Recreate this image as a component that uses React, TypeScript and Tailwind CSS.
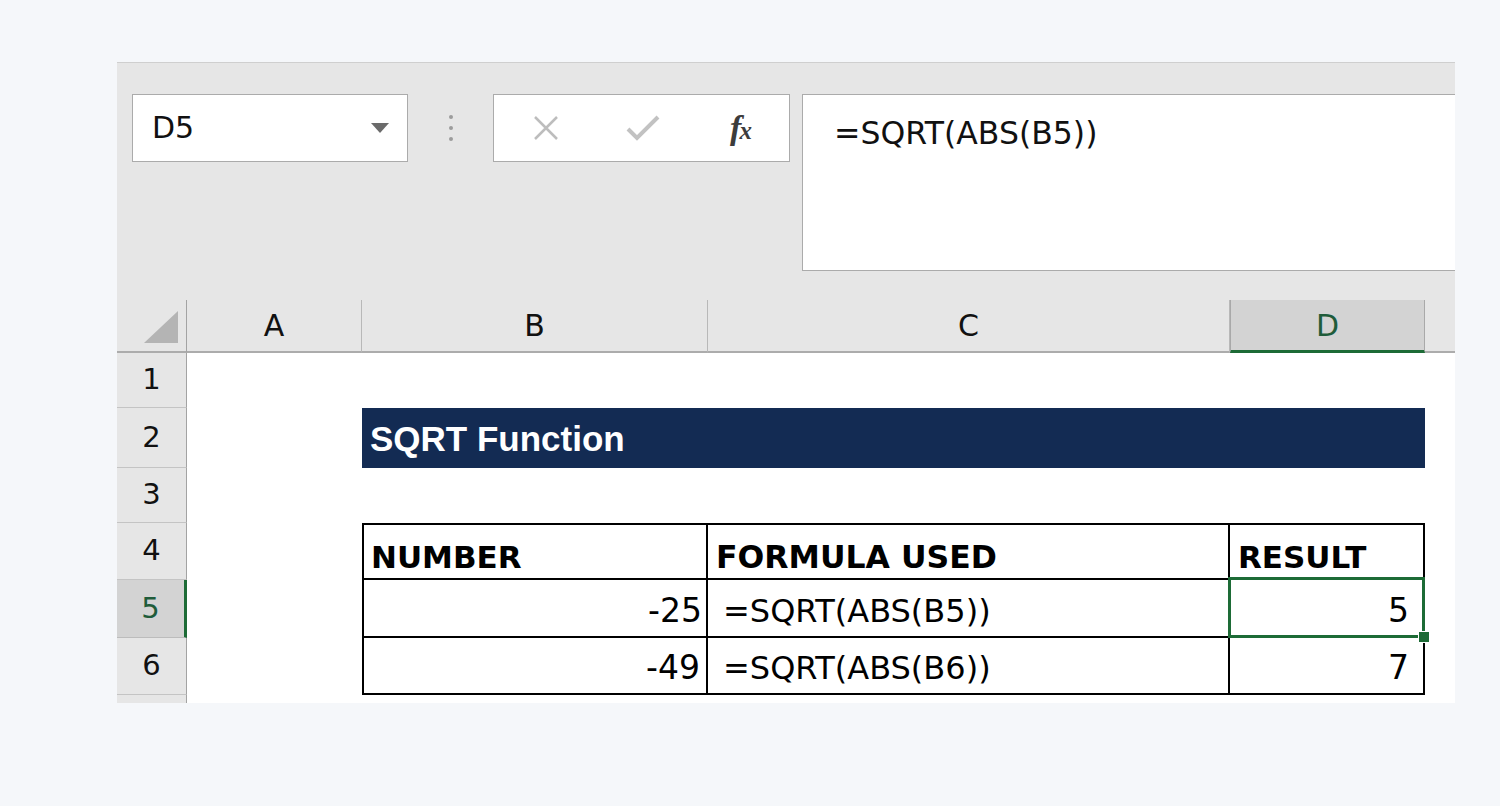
export default function App() {
  return (
    <div className="w-[1500px] h-[806px] bg-[#f5f7fa] pt-[62px] pl-[117px] font-['DejaVu_Sans',sans-serif]">
      <div className="w-[1338px] h-[641px] bg-[#e6e6e6] border-t border-[#cfcfcf] flex flex-col overflow-hidden">
        <FormulaBar />
        <Sheet />
      </div>
    </div>
  );
}

function FormulaBar() {
  return (
    <div className="h-[237px] pt-[31px] flex items-start shrink-0">
      <div className="ml-[15px] w-[276px] h-[68px] bg-white border border-[#ababab] flex items-center justify-between pl-[19px] pr-[17px]">
        <span className="text-[30px] leading-none text-[#111]">D5</span>
        <svg width="20" height="12" viewBox="0 0 20 12">
          <path d="M1 1 L19 1 L10 11 Z" fill="#6b6b6b" />
        </svg>
      </div>

      <div className="w-[85px] h-[68px] flex flex-col items-center justify-center gap-[7px]">
        <span className="w-[4px] h-[4px] rounded-full bg-[#9c9c9c]" />
        <span className="w-[4px] h-[4px] rounded-full bg-[#9c9c9c]" />
        <span className="w-[4px] h-[4px] rounded-full bg-[#9c9c9c]" />
      </div>

      <div className="w-[297px] h-[68px] bg-white border border-[#ababab] flex items-center">
        <div className="w-[100px] flex justify-center pl-[4px]">
          <svg width="28" height="28" viewBox="0 0 28 28">
            <path d="M3 3 L25 25 M25 3 L3 25" stroke="#bdbdbd" strokeWidth="2.5" fill="none" />
          </svg>
        </div>
        <div className="w-[97px] flex justify-center">
          <svg width="36" height="30" viewBox="0 0 36 30">
            <path d="M3 16 L12 25 L33 4" stroke="#c2c2c2" strokeWidth="4" fill="none" />
          </svg>
        </div>
        <div className="w-[98px] flex justify-center">
          <span className="font-['Liberation_Serif',serif] italic text-[34px] leading-none text-[#3c3c3c] font-bold tracking-[-2px]">
            f<span className="text-[25px]">x</span>
          </span>
        </div>
      </div>

      <div className="ml-[12px] flex-1 h-[177px] bg-white border-y border-l border-[#ababab] pl-[31px] pt-[18px]">
        <span className="text-[31.5px] leading-[40px] text-[#111]">=SQRT(ABS(B5))</span>
      </div>
    </div>
  );
}

function RowHead({ n, selected }: { n: string; selected?: boolean }) {
  return (
    <div
      className={
        selected
          ? "bg-[#d3d3d3] border-b border-[#bcbcbc] border-r-[3px] border-r-[#1d6b36] flex items-center justify-center text-[29px] text-[#1f5c3a]"
          : "bg-[#e6e6e6] border-b border-[#c4c4c4] border-r border-r-[#a3a3a3] flex items-center justify-center text-[29px] text-[#111]"
      }
    >
      {n}
    </div>
  );
}

function ColHead({ label, selected }: { label: string; selected?: boolean }) {
  return (
    <div
      className={
        selected
          ? "bg-[#d3d3d3] border-x border-[#a9a9a9] border-b-[3px] border-b-[#1d6b36] flex items-center justify-center text-[30px] text-[#1f5c3a]"
          : "border-r border-[#b8b8b8] border-b-2 border-b-[#acacac] flex items-center justify-center text-[30px] text-[#111]"
      }
    >
      {label}
    </div>
  );
}

function Sheet() {
  return (
    <div className="grid grid-cols-[70px_175px_346px_522px_195px_30px] grid-rows-[53px_55px_60px_55px_57px_58px_57px_8px]">
      {/* header row */}
      <div className="border-r border-[#a3a3a3] border-b-2 border-b-[#acacac] relative">
        <svg className="absolute left-[27px] top-[11px]" width="34" height="32" viewBox="0 0 34 32">
          <path d="M34 0 L34 32 L0 32 Z" fill="#b4b4b4" />
        </svg>
      </div>
      <ColHead label="A" />
      <ColHead label="B" />
      <ColHead label="C" />
      <ColHead label="D" selected />
      <div className="border-b-2 border-[#acacac]" />

      {/* 1 */}
      <RowHead n="1" />
      <div className="col-span-5 bg-white" />

      {/* 2 */}
      <RowHead n="2" />
      <div className="bg-white" />
      <div className="col-span-3 bg-[#132b53] flex items-center pl-[8px] pt-[2px]">
        <span className="font-['Liberation_Sans',sans-serif] font-bold text-[35px] text-white">
          SQRT Function
        </span>
      </div>
      <div className="bg-white" />

      {/* 3 */}
      <RowHead n="3" />
      <div className="col-span-5 bg-white" />

      {/* 4 */}
      <RowHead n="4" />
      <div className="bg-white" />
      <div className="bg-white border-2 border-black flex items-end pl-[7px] pb-[1px]">
        <span className="font-bold text-[31px] leading-[40px] text-black">NUMBER</span>
      </div>
      <div className="bg-white border-y-2 border-r-2 border-black flex items-end pl-[8px] pb-[1px]">
        <span className="font-bold text-[31.5px] leading-[40px] text-black">FORMULA USED</span>
      </div>
      <div className="bg-white border-y-2 border-r-2 border-black flex items-end pl-[8px] pb-[1px]">
        <span className="font-bold text-[31px] leading-[40px] text-black">RESULT</span>
      </div>
      <div className="bg-white" />

      {/* 5 */}
      <RowHead n="5" selected />
      <div className="bg-white" />
      <div className="bg-white border-x-2 border-b-2 border-black flex items-end justify-end pr-[4px] pb-[5px]">
        <span className="text-[33px] leading-[40px] text-black">-25</span>
      </div>
      <div className="bg-white border-r-2 border-b-2 border-black flex items-end pl-[15px] pb-[5px]">
        <span className="text-[32px] leading-[40px] text-black">=SQRT(ABS(B5))</span>
      </div>
      <div className="bg-white border-r-2 border-b-2 border-black flex items-end justify-end pr-[14px] pb-[5px] relative">
        <span className="text-[33px] leading-[40px] text-black">5</span>
        <div className="absolute -left-[2px] -top-[3px] -right-[2px] -bottom-[2px] border-[3px] border-[#1d6b36]" />
        <div className="absolute -right-[7px] -bottom-[7px] w-[12px] h-[12px] bg-[#1d6b36] border border-white" />
      </div>
      <div className="bg-white" />

      {/* 6 */}
      <RowHead n="6" />
      <div className="bg-white" />
      <div className="bg-white border-x-2 border-b-2 border-black flex items-end justify-end pr-[6px] pb-[5px]">
        <span className="text-[33px] leading-[40px] text-black">-49</span>
      </div>
      <div className="bg-white border-r-2 border-b-2 border-black flex items-end pl-[15px] pb-[5px]">
        <span className="text-[32px] leading-[40px] text-black">=SQRT(ABS(B6))</span>
      </div>
      <div className="bg-white border-r-2 border-b-2 border-black flex items-end justify-end pr-[14px] pb-[5px]">
        <span className="text-[33px] leading-[40px] text-black">7</span>
      </div>
      <div className="bg-white" />

      {/* 7 (cut off) */}
      <div className="bg-[#e6e6e6] border-r border-[#a3a3a3]" />
      <div className="col-span-5 bg-white" />
    </div>
  );
}
